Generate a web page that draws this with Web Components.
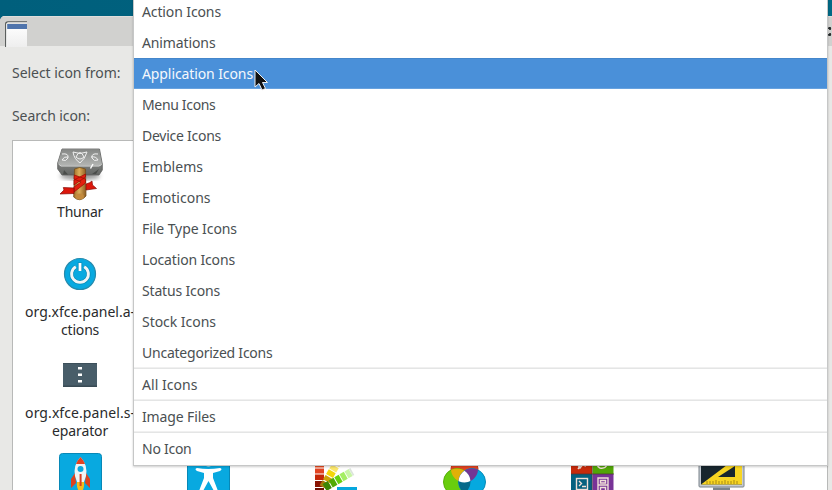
<!DOCTYPE html>
<html lang="en"><head><meta charset="utf-8"><title>Select an Icon</title>
<style>html,body{margin:0;width:832px;height:490px;overflow:hidden;background:#005f7c;font-family:"Noto Sans","Open Sans",sans-serif}</style></head>
<body><icon-chooser></icon-chooser>
<script>
// Label whose letter spacing adapts to the width given in the "w" attribute.
class FitLabel extends HTMLElement{
  connectedCallback(){
    const r=this.attachShadow({mode:'open'});
    r.innerHTML='<style>:host{display:block;white-space:nowrap;line-height:18px}span{display:inline-block}</style><span><slot></slot></span>';
    const s=r.querySelector('span'),w=+this.getAttribute('w');
    if(w)s.style.letterSpacing=((w-s.getBoundingClientRect().width)/this.textContent.length)+'px';
  }
}
customElements.define('fit-label',FitLabel);

class MenuItem extends HTMLElement{
  connectedCallback(){
    this.attachShadow({mode:'open'}).innerHTML=`<style>
    :host{display:flex;align-items:center;box-sizing:border-box;height:31px;padding:0 8px;color:#4a5052;font-size:14px}
    :host([selected]){background:#4a90d9;color:#f5f8fc;box-shadow:inset 0 1px #4486cb,inset 0 -1px #67a2df}
    :host([divided]){height:32px;border-top:1px solid #e4e5e5;box-shadow:0 -1px #f0f0f0}
    </style><fit-label w="${this.getAttribute('w')}">${this.textContent}</fit-label>`;
  }
}
customElements.define('menu-item',MenuItem);

class PopupMenu extends HTMLElement{
  connectedCallback(){
    this.attachShadow({mode:'open'}).innerHTML=`<style>
    :host{display:flex;flex-direction:column;box-sizing:border-box;background:#fff;border:1px solid #c6c7c7;border-top:0;box-shadow:0 1px 2px #0003}
    </style><slot></slot>`;
  }
}
customElements.define('popup-menu',PopupMenu);

const art={
thunar:`<svg width="48" height="54" viewBox="0 0 48 54"><defs><linearGradient id="t" x2="0" y2="1"><stop stop-color="#868886"/><stop offset="1" stop-color="#b2b4b2"/></linearGradient><linearGradient id="m" x2="0" y2="1"><stop stop-color="#9a9c9a"/><stop offset="1" stop-color="#646664"/></linearGradient><linearGradient id="w"><stop stop-color="#9d6c27"/><stop offset=".45" stop-color="#dcae5a"/><stop offset="1" stop-color="#8d5a1f"/></linearGradient><filter id="b"><feGaussianBlur stdDeviation="2"/></filter></defs>
<ellipse cx="24" cy="29" rx="20" ry="4" fill="#0006" filter="url(#b)"/><path d="M6 2H43.5L46.3 17V23L43 28H6L1.7 22V16Z" fill="url(#m)" stroke="#5a5c5a" stroke-width=".8"/><path d="M6 2.5H43L46 17 43 18.5H5L2 16Z" fill="url(#t)"/><path d="M2.5 17L5 19H43L45.7 17.5" stroke="#dcdddc" stroke-width="1" fill="none"/><path d="M17 5Q24 8 31 5Q29 12 24 16Q18 12 17 5M20 10Q24 1 28 10Q24 14 20 10ZM6 7Q13 6 12 11Q10 15 6 13Q8 9 12 10M42 7Q35 6 36 11Q38 15 42 13Q40 9 35 10" fill="none" stroke="#f0f0f0" stroke-width="1"/><path d="M8 23L12 27.5H7ZM43 22L40 27H36Z" fill="#4a4c4a"/><path d="M37 17L34.5 21.5" stroke="#fff" stroke-width="1.4"/><path d="M18.5 22Q23.5 19 29.5 22L30 49Q24 56 17.7 50Z" fill="url(#w)" stroke="#74501e" stroke-width=".8"/><path d="M18.3 28L29.5 32V36L18 45V40L25 35 18 32ZM29.5 27V30L18 38V33Z" fill="#e2200f" stroke="#9a0a05" stroke-width=".7"/><path d="M18 41L7.3 40.5 8 43 4 47 18 46.5ZM30 37Q34 36 36 34L36.5 38 40.5 41.5 30 43Z" fill="#dc160b" stroke="#860a06" stroke-width=".7"/><ellipse cx="23.7" cy="49.5" rx="4.2" ry="3" fill="#c38a3d"/></svg>`,
power:`<svg width="34" height="34" viewBox="0 0 34 34"><circle cx="17" cy="17" r="15.5" fill="#08a9e0" stroke="#278aac" stroke-width="1.2"/><path d="M12.8 9.7A8.4 8.4 0 1 0 21.2 9.7" fill="none" stroke="#0788b4" stroke-width="4.2"/><path d="M12.8 9.7A8.4 8.4 0 1 0 21.2 9.7" fill="none" stroke="#f2f5f6" stroke-width="2.9"/><path d="M17 5.5V14" stroke="#0788b4" stroke-width="4.4"/><path d="M17 6V14" stroke="#fff" stroke-width="2.8"/></svg>`,
sep:`<svg width="34" height="24"><path fill="#485d69" d="M0 0H34V24H0Z"/><path fill="#394b55" d="M0 22.5H34V24H0ZM0 0H34V.7H0Z"/><path d="M15 4h4v2.5h-4zM15 10.5h4V13h-4zM15 17h4v2.5h-4z" fill="#fff"/></svg>`,
rocket:`<svg width="43" height="43"><rect x=".5" y=".5" width="42" height="42" rx="3" fill="#08a9e0" stroke="#0788b7"/><path d="M16 20L12 26V35L17 30ZM27 20L31 26V35L26 30Z" fill="#dd421e"/><path d="M18 29Q17 36 21.5 40Q26 36 25 29Z" fill="#f5bb1d"/><path d="M21.5 4Q29 12 27 23L25 29H18L16 23Q14 12 21.5 4Z" fill="#f1f3f4"/><path d="M21.5 4Q25 8 26 11H17Q18 8 21.5 4Z" fill="#e24322"/><circle cx="21.5" cy="16" r="3" fill="#08a9e0"/><path d="M20.6 21h2v12h-2z" fill="#db3f22"/></svg>`,
person:`<svg width="43" height="43"><rect x=".5" y=".5" width="42" height="42" rx="3" fill="#08a9e0" stroke="#0788b7"/><circle cx="21.5" cy="9.5" r="4" fill="#f4f5f5"/><path d="M10 15Q21 17 33 15Q36 16 33 18L26 20V25L31 38H27L21.5 28 16 38H12L17 25V20L10 18Q7 16 10 15Z" fill="#fff"/></svg>`,
swatches:`<svg width="43" height="43"><path fill="#e84c22" d="M0 8h9v6.5H0z"/><path fill="#e24422" d="M0 15.5h9v5H0z"/><path fill="#c52809" d="M0 21.5h9v5.5H0z"/><path fill="#891403" d="M0 28h9v6H0z"/><path fill="#701003" d="M0 35h9v8H0z"/><g transform="translate(8.5 33.5) rotate(30)"><path fill="#fbea91" d="M-4-30h8v5.5h-8z"/><path fill="#fbe66b" d="M-4-23.5h8v5h-8z"/><path fill="#f5d609" d="M-4-17.5h8v5.5h-8z"/><path fill="#cda207" d="M-4-11h8v5h-8z"/><path fill="#a87b0b" d="M-4-5h8v6h-8z"/></g><g transform="translate(10.5 34) rotate(60)"><path fill="#dce4dc" d="M-4-31h8v1.8h-8z"/><path fill="#c8f5a5" d="M-4-29h8v4.7h-8z"/><path fill="#a4ee62" d="M-4-23.4h8v5h-8z"/><path fill="#68d00e" d="M-4-17.5h8v5h-8z"/><path fill="#51aa04" d="M-4-11.5h8v5.5h-8z"/><path fill="#3d8604" d="M-4-5h8v6h-8z"/></g><path d="M22 34h20v9H22z" fill="#05a7de"/></svg>`,
colors:`<svg width="43" height="43"><defs><clipPath id="g"><circle cx="14" cy="29" r="13.5"/></clipPath><clipPath id="r"><circle cx="21.5" cy="16" r="13.5"/></clipPath></defs><circle cx="21.5" cy="16" r="13.5" fill="#e44422" stroke="#c93616"/><circle cx="14" cy="29" r="13.5" fill="#69cd0d" stroke="#55af08"/><circle cx="29" cy="29" r="13.5" fill="#05a9df" stroke="#078bb6"/><circle cx="21.5" cy="16" r="13.5" fill="#e0b008" clip-path="url(#g)"/><circle cx="29" cy="29" r="13.5" fill="#743595" clip-path="url(#r)"/><g clip-path="url(#g)"><circle cx="29" cy="29" r="13.5" fill="#056a8b"/><circle cx="29" cy="29" r="13.5" fill="#fff" clip-path="url(#r)"/></g></svg>`,
apps:`<svg width="43" height="43"><path d="M0 0h21v21H0z" fill="#c72a0b"/><path d="M21.5 0h21v21h-21z" fill="#51a507"/><path d="M0 21h21v22H0z" fill="#05607f"/><path d="M21.5 21h21v22h-21z" fill="#783397"/><path d="M0 21H43M21.2 0V43" stroke="#4d3035" stroke-width=".7"/><g fill="none" stroke="#f0dfd8" stroke-width="1.4"><path d="M7 12L9 15 13 10M12 12L15 13M9 13L7 16M36 12Q34 16 29 15Q25 13 27 9M29 11L35 12"/><rect x="5.5" y="25.5" width="11" height="11"/><path d="M8 28L10.5 30.5 8 33M11 33.5H15"/><path d="M27 25H37V38H27ZM29.5 27.5H34.5V30H29.5ZM27 32H37M29.5 34.5H34.5V38H29.5Z"/></g></svg>`,
ruler:`<svg width="47" height="43"><rect x="1" y="1" width="45" height="33" rx="1" fill="#c5cbd3" stroke="#7b838a"/><path fill="#18262e" d="M3 2H44V31.5H3Z"/><path d="M37 6V2H44V31.5H3Z" fill="#f7d522"/><path d="M37 13V24H20Z" fill="#18262e"/><path d="M9 31V28M12 31V28M15 31V28M18 31V27M21 31V28M24 31V28M27 31V27M30 31V28M33 31V28M36 31V27M39 31V28" stroke="#a78a15" stroke-width="1"/><path fill="#79838a" d="M15 34.5H32V43H15Z"/></svg>`};

class IconTile extends HTMLElement{
  connectedCallback(){
    this.attachShadow({mode:'open'}).innerHTML=`<style>
    :host{display:flex;flex-direction:column;align-items:center;font-size:14px;color:#292b2c;min-width:0}
    .pic{height:var(--pic,54px);display:flex;align-items:flex-end}svg{display:block}</style><div class="pic">${art[this.getAttribute('art')]}</div><slot></slot>`;
  }
}
customElements.define('icon-tile',IconTile);

class IconChooser extends HTMLElement{
  connectedCallback(){
    const items=[['Action Icons',79],['Animations',73.5],['Application Icons',111],['Menu Icons',73.5],['Device Icons',79],['Emblems',61],['Emoticons',68.5],['File Type Icons',95],['Location Icons',93],['Status Icons',78],['Stock Icons',74],['Uncategorized Icons',130.5],['All Icons',55.5,1],['Image Files',73.5,1],['No Icon',49.5,1]];
    this.attachShadow({mode:'open'}).innerHTML=`<style>
    :host{display:block;position:relative;width:832px;height:490px;overflow:hidden;background:linear-gradient(90deg,#005f7c,#006985)}
    .window{box-sizing:border-box;height:474px;margin-top:16px;display:flex;flex-direction:column;background:#e8e8e6;border-radius:5px 0 0;overflow:hidden}
    header{flex:none;height:30px;box-sizing:border-box;background:#d1d1cf;border-top:1px solid #dededc;display:flex;justify-content:space-between;padding:4px 0 0 5px;align-items:flex-start}
    header svg{display:block}.form{flex:none;height:94px;display:flex;flex-direction:column;gap:25px;padding-top:18px;padding-left:12px;box-sizing:border-box;font-size:14px;color:#4b5052}
    .list{flex:1;margin:0 4px 0 12px;border:1px solid #b8b9b8;background:#fff;border-bottom:0;display:flex;flex-direction:column;min-height:0;overflow:hidden}
    .row{display:grid;grid-template-columns:repeat(6,128.2px);padding-left:3px;flex:none}
    .a{height:106px;padding-top:6px}.a icon-tile{--pic:54px}.a fit-label{margin-top:2px}.b{height:101px}.b icon-tile{--pic:38px}.b fit-label:first-of-type{margin-top:12px}.c{height:99px}.c icon-tile{--pic:33px}.c fit-label:first-of-type{margin-top:17px}
    .d{height:50px}.d icon-tile{--pic:43px}
    popup-menu{position:absolute;left:133px;top:-4px;width:695px;height:470px}
    .cursor{position:absolute;left:254px;top:69px}
    </style>
    <div class="window"><header><svg width="22" height="26"><defs><linearGradient id="p" x2="0" y2="1"><stop stop-color="#fff"/><stop offset="1" stop-color="#eee"/></linearGradient></defs><path d="M2 3H22V26H2Z" fill="url(#p)"/><path d="M2 3H22V8H2Z" fill="#4f74ac"/><path d="M.7 26V3Q.7.8 3 .8H22" fill="none" stroke="#555a59" stroke-width="1.3"/><path d="M1.7 26V3Q2 2 3 1.9H22" fill="none" stroke="#f4f4f4"/></svg><svg width="4" height="20"><path d="M0 7L3 8M0 14L3 13M2 6V9M2 12V15" stroke="#232829" stroke-width="1.6" fill="none"/></svg></header>
    <div class="form"><fit-label w="108.5">Select icon from:</fit-label><fit-label w="78">Search icon:</fit-label></div>
    <div class="list"><div class="row a"><icon-tile art="thunar"><fit-label w="46">Thunar</fit-label></icon-tile></div>
    <div class="row b"><icon-tile art="power"><fit-label w="110">org.xfce.panel.a-</fit-label><fit-label w="38">ctions</fit-label></icon-tile></div>
    <div class="row c"><icon-tile art="sep"><fit-label w="110">org.xfce.panel.s-</fit-label><fit-label w="56">eparator</fit-label></icon-tile></div>
    <div class="row d">${['rocket','person','swatches','colors','apps','ruler'].map(a=>`<icon-tile art="${a}"></icon-tile>`).join('')}</div></div></div>
    <popup-menu>${items.map(([t,w,d],i)=>`<menu-item w="${w}"${d?' divided':''}${i==2?' selected':''}>${t}</menu-item>`).join('')}</popup-menu>
    <svg class="cursor" width="15" height="23"><path d="M1 1V18L5 14.5 8 21 11.5 19.5 8.5 13.5H13.5Z" fill="#111" stroke="#eee" stroke-width="1"/></svg>`;
  }
}
customElements.define('icon-chooser',IconChooser);
</script></body></html>
